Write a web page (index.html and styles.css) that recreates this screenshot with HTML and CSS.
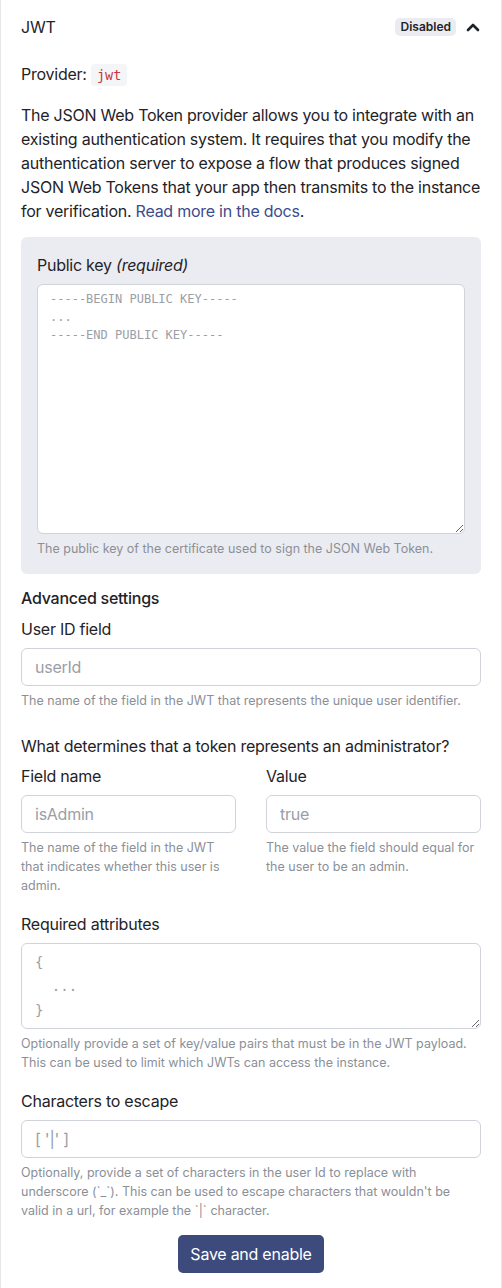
FILE: index.html
```html
<!DOCTYPE html>
<html>
<head>
<meta charset="utf-8">
<link rel="stylesheet" href="styles.css">
</head>
<body>
<div class="card">
  <div class="header">
    <div class="title">JWT</div>
    <div class="header-right">
      <span class="badge">Disabled</span>
      <svg class="chevron" width="16" height="16" viewBox="0 0 16 16"><path d="M3 11 L8 6 L13 11" fill="none" stroke="#1f2328" stroke-width="2.6" stroke-linecap="round" stroke-linejoin="round"/></svg>
    </div>
  </div>
  <div class="provider">Provider: <code class="code">jwt</code></div>
  <p class="desc">The JSON Web Token provider allows you to integrate with an existing authentication system. It requires that you modify the authentication server to expose a flow that produces signed JSON Web Tokens that your app then transmits to the instance for verification. <a class="link" href="#">Read more in the docs</a>.</p>

  <div class="panel">
    <div class="label">Public key <em>(required)</em></div>
    <textarea class="textarea key" placeholder="-----BEGIN PUBLIC KEY-----&#10;...&#10;-----END PUBLIC KEY-----"></textarea>
    <div class="help">The public key of the certificate used to sign the JSON Web Token.</div>
  </div>

  <div class="section-title">Advanced settings</div>
  <div class="label">User ID field</div>
  <input class="input" placeholder="userId">
  <div class="help">The name of the field in the JWT that represents the unique user identifier.</div>

  <div class="question">What determines that a token represents an administrator?</div>
  <div class="cols">
    <div class="col">
      <div class="label">Field name</div>
      <input class="input" placeholder="isAdmin">
      <div class="help">The name of the field in the JWT that indicates whether this user is admin.</div>
    </div>
    <div class="col">
      <div class="label">Value</div>
      <input class="input" placeholder="true">
      <div class="help">The value the field should equal for the user to be an admin.</div>
    </div>
  </div>

  <div class="label spaced">Required attributes</div>
  <textarea class="textarea attrs" placeholder="{&#10;  ...&#10;}"></textarea>
  <div class="help">Optionally provide a set of key/value pairs that must be in the JWT payload. This can be used to limit which JWTs can access the instance.</div>

  <div class="label spaced">Characters to escape</div>
  <input class="input" placeholder="[ '|' ]">
  <div class="help">Optionally, provide a set of characters in the user Id to replace with underscore (`_`). This can be used to escape characters that wouldn't be valid in a url, for example the `|` character.</div>

  <div class="actions"><button class="btn">Save and enable</button></div>
</div>
</body>
</html>
```
FILE: styles.css
```css
* { box-sizing: border-box; }
html, body { margin: 0; padding: 0; background: #fff; }
body {
  font-family: Inter, "Noto Sans", sans-serif;
  color: #1f2328;
  font-size: 16px;
  letter-spacing: -0.25px;
}
.card {
  width: 502px;
  min-height: 1288px;
  border-left: 1px solid #e6e7eb;
  border-right: 1px solid #e6e7eb;
  padding: 16px 20px 16px 20px;
}
.header {
  display: flex;
  justify-content: space-between;
  align-items: center;
  height: 22px;
}
.title { font-size: 16px; line-height: 22px; }
.header-right { display: flex; align-items: center; gap: 9px; }
.badge {
  background: #ebecf1;
  font-size: 12px;
  font-weight: 600;
  line-height: 18px;
  padding: 0 5px;
  border-radius: 5px;
  color: #1f2328;
  letter-spacing: 0;
}
.chevron { display: block; }
.provider {
  margin-top: 25px;
  font-size: 16px;
  line-height: 22px;
}
.code {
  font-family: "DejaVu Sans Mono", "Liberation Mono", monospace;
  font-size: 13.5px;
  letter-spacing: 0;
  color: #c8363e;
  background: #f4f5f7;
  padding: 3px 6px;
  border-radius: 4px;
}
.desc {
  margin: 17px 0 0 0;
  font-size: 16px;
  line-height: 24px;
}
.link { color: #3c4c8c; text-decoration: none; }
.panel {
  margin-top: 14px;
  background: #ebecf1;
  border-radius: 6px;
  padding: 17px 16px 16px 16px;
}
.label { font-size: 16px; line-height: 22px; margin-bottom: 8px; }
.label em { font-style: italic; }
.textarea {
  display: block;
  width: 100%;
  border: 1px solid #d0d3da;
  border-radius: 6px;
  background: #fff;
  font-family: "DejaVu Sans Mono", "Liberation Mono", monospace;
  letter-spacing: 0;
  resize: vertical;
  outline: none;
}
.textarea::placeholder { color: #9a9ea6; }
.key {
  height: 250px;
  font-size: 12px;
  line-height: 18px;
  padding: 5px 12px;
}
.attrs {
  height: 86px;
  font-size: 14px;
  line-height: 24px;
  padding: 6px 13px;
}
.help {
  font-size: 12.5px;
  line-height: 19px;
  color: #8b8f97;
  margin-top: 5px;
  letter-spacing: 0;
}
.panel .help { margin-top: 5px; }
.section-title {
  margin-top: 13px;
  font-size: 16px;
  font-weight: 500;
  line-height: 22px;
  margin-bottom: 9px;
}
.input {
  display: block;
  width: 100%;
  height: 38px;
  border: 1px solid #d0d3da;
  border-radius: 6px;
  padding: 0 13px;
  font-family: Inter, "Noto Sans", sans-serif;
  font-size: 16px;
  letter-spacing: -0.25px;
  outline: none;
  background: #fff;
}
.input::placeholder { color: #9a9ea6; }
.question {
  margin-top: 25px;
  font-size: 16px;
  line-height: 22px;
  margin-bottom: 8px;
}
.cols {
  display: grid;
  grid-template-columns: 1fr 1fr;
  column-gap: 30px;
}
.spaced { margin-top: 18px; }
.actions {
  display: flex;
  justify-content: center;
  margin-top: 15px;
}
.btn {
  background: #3c4a7c;
  color: #fff;
  border: none;
  border-radius: 5px;
  font-family: Inter, "Noto Sans", sans-serif;
  font-size: 16px;
  letter-spacing: -0.25px;
  height: 38px;
  padding: 0 12px;
}
```
